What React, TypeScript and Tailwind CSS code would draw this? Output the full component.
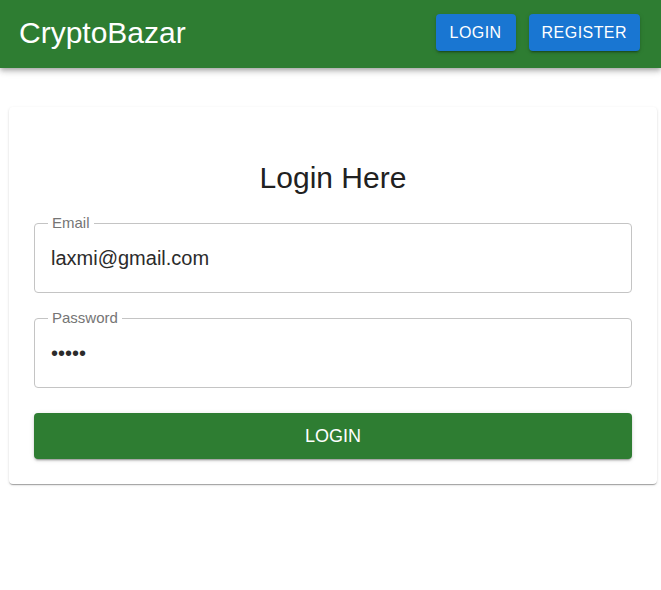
import { useState } from "react";

const font = { fontFamily: '"Liberation Sans", Arial, sans-serif' };

function OutlinedField({
  label,
  type,
  value,
  onChange,
}: {
  label: string;
  type: string;
  value: string;
  onChange: (v: string) => void;
}) {
  return (
    <div className="relative h-[70px] w-full rounded-[4px] border border-[#c4c4c4]">
      <span className="absolute -top-[9px] left-[13px] bg-white px-[4px] text-[15px] leading-[16px] text-[#757575]">
        {label}
      </span>
      <input
        type={type}
        value={value}
        onChange={(e) => onChange(e.target.value)}
        className="h-full w-full bg-transparent px-[16px] text-[20px] text-[#2b2b2b] outline-none"
        style={font}
      />
    </div>
  );
}

export default function App() {
  const [email, setEmail] = useState("laxmi@gmail.com");
  const [password, setPassword] = useState("12345");

  return (
    <div className="min-h-screen bg-white" style={font}>
      <header className="flex h-[68px] items-center justify-between bg-[#2e7d32] pb-[3px] pl-[19px] pr-[21px] shadow-[0px_2px_4px_-1px_rgba(0,0,0,0.2),0px_4px_5px_0px_rgba(0,0,0,0.14),0px_1px_10px_0px_rgba(0,0,0,0.12)]">
        <h1 className="text-[30px] leading-[36px] text-white">CryptoBazar</h1>
        <div className="flex gap-[13px]">
          <button
            type="button"
            className="h-[37px] rounded-[4px] bg-[#1976d2] px-[14px] text-[16px] uppercase tracking-[0.45px] text-white shadow-[0px_3px_1px_-2px_rgba(0,0,0,0.2),0px_2px_2px_0px_rgba(0,0,0,0.14),0px_1px_5px_0px_rgba(0,0,0,0.12)]"
          >
            Login
          </button>
          <button
            type="button"
            className="h-[37px] rounded-[4px] bg-[#1976d2] px-[13px] text-[16px] uppercase tracking-[0.45px] text-white shadow-[0px_3px_1px_-2px_rgba(0,0,0,0.2),0px_2px_2px_0px_rgba(0,0,0,0.14),0px_1px_5px_0px_rgba(0,0,0,0.12)]"
          >
            Register
          </button>
        </div>
      </header>

      <div className="ml-[9px] mt-[39px] w-[648px] rounded-[4px] bg-white px-[25px] pb-[25px] pt-[53px] shadow-[0px_2px_1px_-1px_rgba(0,0,0,0.2),0px_1px_1px_0px_rgba(0,0,0,0.14),0px_1px_3px_0px_rgba(0,0,0,0.12)]">
        <h2 className="mb-[27px] text-center text-[30px] leading-[36px] text-[#212121]">
          Login Here
        </h2>
        <div className="flex flex-col gap-[25px]">
          <OutlinedField label="Email" type="email" value={email} onChange={setEmail} />
          <OutlinedField
            label="Password"
            type="password"
            value={password}
            onChange={setPassword}
          />
          <button
            type="button"
            className="h-[46px] w-full rounded-[4px] bg-[#2e7d32] text-[18px] font-medium uppercase text-white shadow-[0px_3px_1px_-2px_rgba(0,0,0,0.2),0px_2px_2px_0px_rgba(0,0,0,0.14),0px_1px_5px_0px_rgba(0,0,0,0.12)]"
          >
            Login
          </button>
        </div>
      </div>
    </div>
  );
}
